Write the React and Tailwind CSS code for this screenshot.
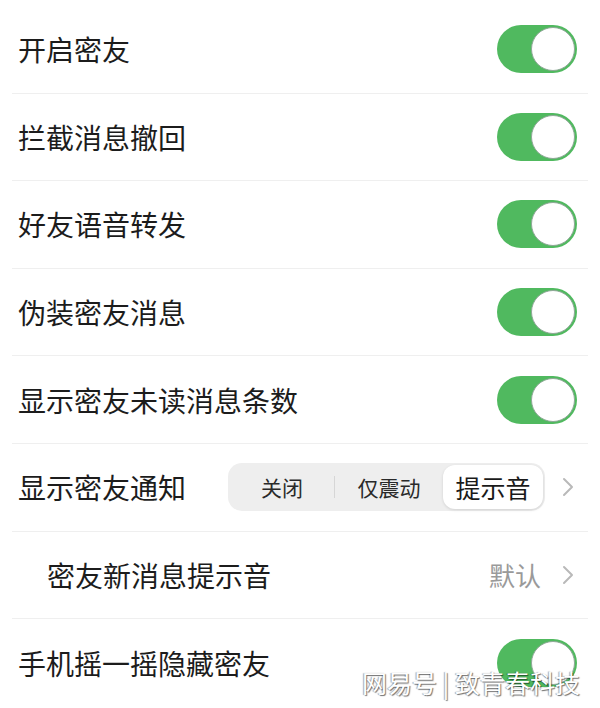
import { useState } from 'react'

const FONT = { fontFamily: '"Noto Sans CJK SC", "Noto Sans", sans-serif' }

function Toggle({ on = true }) {
  return (
    <div className={`w-[80px] h-[48px] rounded-full p-[2px] flex items-center ${on ? 'bg-[#50b95f] justify-end' : 'bg-[#e5e5e5] justify-start'}`}>
      <div className="w-[44px] h-[44px] rounded-full bg-white border-[1.5px] border-[#8fa897]" />
    </div>
  )
}

function Chevron() {
  return (
    <svg width="14" height="22" viewBox="0 0 14 22" className="shrink-0">
      <polyline points="3,3 11,11 3,19" fill="none" stroke="#b9b9b9" strokeWidth="2" strokeLinecap="round" strokeLinejoin="round" />
    </svg>
  )
}

function Row({ children, indent = false, last = false }) {
  return (
    <div className={`mx-[12px] h-[87.6px] flex items-center justify-between ${indent ? 'pl-[35px]' : 'pl-[6px]'} pr-[11px] ${last ? '' : 'border-b border-[#efefef]'}`}>
      {children}
    </div>
  )
}

export default function App() {
  const [toggles, setToggles] = useState({
    open: true,
    recall: true,
    forward: true,
    disguise: true,
    unread: true,
    shake: true,
  })
  const [mode, setMode] = useState(2)
  const flip = (k) => setToggles((t) => ({ ...t, [k]: !t[k] }))

  const items = [
    ['open', '开启密友'],
    ['recall', '拦截消息撤回'],
    ['forward', '好友语音转发'],
    ['disguise', '伪装密友消息'],
    ['unread', '显示密友未读消息条数'],
  ]

  const segs = [
    { label: '关闭', w: 'w-[104px]' },
    { label: '仅震动', w: 'w-[108px]' },
    { label: '提示音', w: 'w-[100px]' },
  ]

  return (
    <div className="relative w-[600px] h-[708px] bg-white overflow-hidden pt-[6px] text-[#1c1c1c]" style={FONT}>
      {items.map(([k, label]) => (
        <Row key={k}>
          <span className="text-[28px] leading-none">{label}</span>
          <button onClick={() => flip(k)}>
            <Toggle on={toggles[k]} />
          </button>
        </Row>
      ))}

      <Row>
        <span className="text-[28px] leading-none">显示密友通知</span>
        <div className="flex items-center gap-[16px] mr-[2px]">
          <div className="flex items-center h-[48px] p-[2px] rounded-[14px] bg-[#eeeeee]">
            {segs.map((s, i) => (
              <div key={s.label} className="flex items-center">
                <button
                  onClick={() => setMode(i)}
                  className={`${s.w} h-[44px] flex items-center justify-center rounded-[12px] ${mode === i ? 'bg-white shadow-[0_1px_3px_rgba(0,0,0,0.12)] text-[25px] text-[#1a1a1a]' : 'text-[21px] text-[#2a2a2a]'}`}
                >
                  {s.label}
                </button>
                {i === 0 && mode !== 0 && mode !== 1 && <div className="w-px h-[22px] bg-[#d6d6d6]" />}
              </div>
            ))}
          </div>
          <Chevron />
        </div>
      </Row>

      <Row indent>
        <span className="text-[28px] leading-none">密友新消息提示音</span>
        <div className="flex items-center gap-[20px] mr-[2px]">
          <span className="text-[26px] leading-none text-[#9a9a9a]">默认</span>
          <Chevron />
        </div>
      </Row>

      <Row last>
        <span className="text-[28px] leading-none">手机摇一摇隐藏密友</span>
        <button onClick={() => flip('shake')}>
          <Toggle on={toggles.shake} />
        </button>
      </Row>

      <div className="absolute left-[362px] top-[670px] text-[25px] leading-none text-white [text-shadow:1px_1px_1px_rgba(0,0,0,0.55),-1px_0_1px_rgba(0,0,0,0.35)] pointer-events-none">
        网易号 | 致青春科技
      </div>
    </div>
  )
}
